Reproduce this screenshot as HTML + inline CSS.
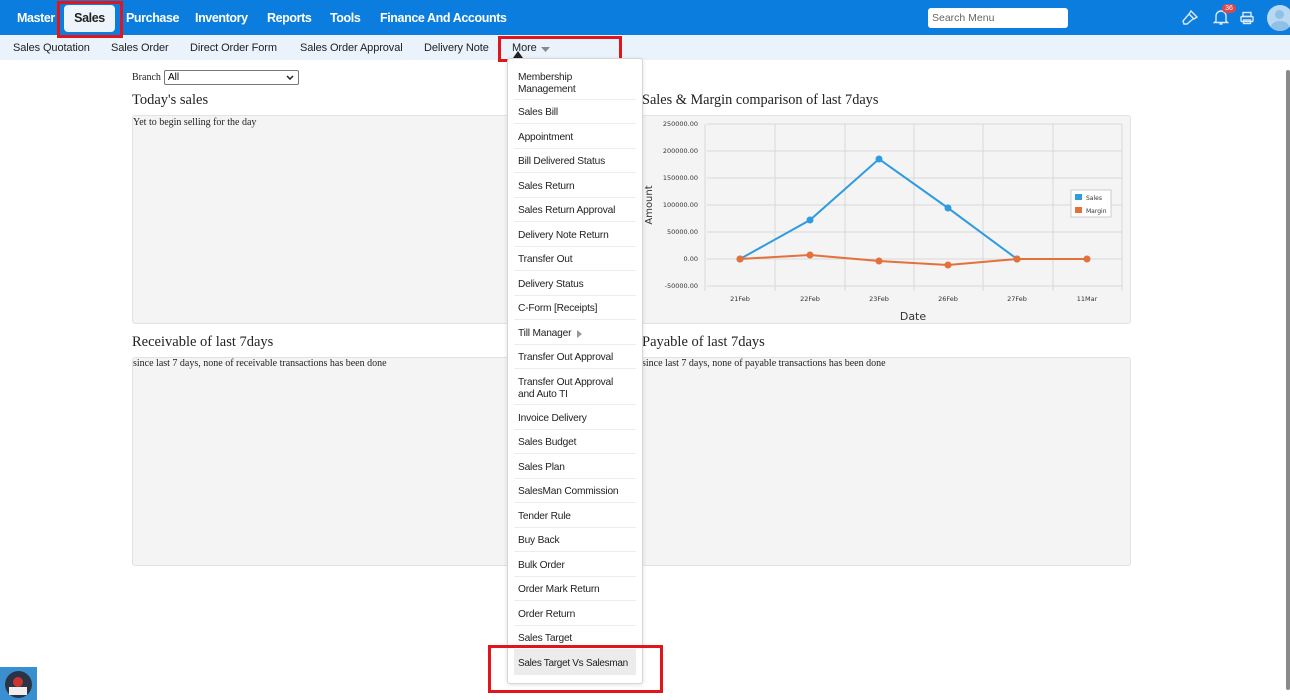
<!DOCTYPE html>
<html><head><meta charset="utf-8"><style>
*{box-sizing:border-box;margin:0;padding:0}
body{width:1290px;height:700px;position:relative;overflow:hidden;background:#fff;font-family:"Liberation Sans",sans-serif}
.top{position:absolute;left:0;top:0;width:1290px;height:35px;background:#0b7ddf}
.top .m{position:absolute;top:11px;color:#fff;font-weight:bold;font-size:12.5px;letter-spacing:-0.4px}
.salesTab{position:absolute;left:64px;top:5px;width:51px;height:27px;background:#eef4fb;border-radius:4px;color:#222;font-weight:bold;font-size:12.5px;text-align:center;line-height:27px;letter-spacing:-0.4px}
.sub{position:absolute;left:0;top:35px;width:1290px;height:25px;background:#eaf2fb}
.sub span{position:absolute;top:7px;font-size:11px;color:#222;letter-spacing:-0.1px}
.red{position:absolute;border:3px solid #e0161c}
.serif{font-family:"Liberation Serif",serif;color:#222;position:absolute;white-space:nowrap}
.box{position:absolute;background:#f4f4f4;border:1px solid #e2e2e2;border-radius:3px}
.dd{position:absolute;left:507px;top:58px;width:136px;height:626px;background:#fff;border:1px solid #d6d6d6;border-radius:3px;box-shadow:0 1px 4px rgba(0,0,0,.12)}
.it{position:absolute;left:6px;width:122px;border-bottom:1px solid #ececec;font-size:10.2px;color:#222;padding-left:4px;padding-top:4px;display:flex;align-items:center;line-height:12px;letter-spacing:-0.2px;white-space:nowrap}
</style></head><body>
<div class="top">
<span class="m" style="left:17px">Master</span>
<span class="m" style="left:126px">Purchase</span>
<span class="m" style="left:195px">Inventory</span>
<span class="m" style="left:267px">Reports</span>
<span class="m" style="left:330px">Tools</span>
<span class="m" style="left:380px">Finance And Accounts</span>
<div style="position:absolute;left:928px;top:8px;width:140px;height:20px;background:#fff;border-radius:3px;font-size:10.5px;color:#666;padding:4px 0 0 4px">Search Menu</div>
<svg style="position:absolute;left:1181px;top:9px" width="18" height="17" viewBox="0 0 18 17" fill="none" stroke="#dbe9f8" stroke-width="1.4"><path d="M10 2l6 6-3 2-5-5z M8 5l-6 7 1 3 3 0 6-5"/></svg>
<svg style="position:absolute;left:1213px;top:8px" width="16" height="18" viewBox="0 0 16 18" fill="none" stroke="#dbe9f8" stroke-width="1.4"><path d="M3 13V8a5 5 0 0 1 10 0v5l1.5 1.5h-13z M6.5 16h3"/></svg>
<div style="position:absolute;left:1222px;top:4px;width:14px;height:9px;border-radius:5px;background:#e04848;color:#fff;font-size:7px;text-align:center;line-height:9px">36</div>
<svg style="position:absolute;left:1240px;top:11px" width="14" height="14" viewBox="0 0 14 14" fill="none" stroke="#dbe9f8" stroke-width="1.4"><rect x="3" y="1.5" width="8" height="4"/><rect x="1" y="5.5" width="12" height="5" rx="1"/><rect x="3.5" y="9" width="7" height="3.5"/></svg>
<div style="position:absolute;left:1267px;top:5px;width:26px;height:26px;border-radius:50%;background:#b9d9f3;overflow:hidden"><div style="position:absolute;left:8px;top:5px;width:9px;height:9px;border-radius:50%;background:#8fc0e6"></div><div style="position:absolute;left:4px;top:16px;width:18px;height:12px;border-radius:50%;background:#8fc0e6"></div></div>
</div>
<div class="salesTab">Sales</div>
<div class="sub">
<span style="left:13px">Sales Quotation</span>
<span style="left:111px">Sales Order</span>
<span style="left:190px">Direct Order Form</span>
<span style="left:300px">Sales Order Approval</span>
<span style="left:424px">Delivery Note</span>
<span style="left:512px">More</span>
<svg style="position:absolute;left:541px;top:12px" width="9" height="5"><path d="M0 0h9L4.5 5z" fill="#888"/></svg>
</div>
<div class="red" style="left:57px;top:1px;width:66px;height:37px"></div>
<div class="red" style="left:498px;top:36px;width:124px;height:26px"></div>

<div class="serif" style="left:132px;top:72px;font-size:10px">Branch</div>
<div style="position:absolute;left:164px;top:70px;width:135px;height:15px;border:1px solid #777;border-radius:2px;font-size:10px;padding-left:3px;line-height:13px">All<svg style="position:absolute;right:4px;top:4px" width="8" height="5"><path d="M1 1l3 3 3-3" stroke="#222" stroke-width="1.5" fill="none"/></svg></div>
<div class="serif" style="left:132px;top:92px;font-size:14.5px">Today's sales</div>
<div class="box" style="left:132px;top:115px;width:390px;height:209px"></div>
<div class="serif" style="left:133px;top:117px;font-size:10px">Yet to begin selling for the day</div>
<div class="serif" style="left:642px;top:92px;font-size:14.3px">Sales &amp; Margin comparison of last 7days</div>
<div class="box" style="left:642px;top:115px;width:489px;height:209px"></div>
<svg style="position:absolute;left:642px;top:115px" width="489" height="209" font-family="DejaVu Sans,sans-serif">
<g stroke="#d8d8d8" stroke-width="1">
<path d="M65 9H480M65 36H480M65 63H480M65 90H480M65 117H480M65 144H480M65 171H480"/>
<path d="M63 9V176M133 9V176M203 9V176M272 9V176M341 9V176M411 9V176M480 9V176"/>
</g>
<g font-size="6.5" fill="#333" text-anchor="end"><text x="56" y="11">250000.00</text><text x="56" y="38">200000.00</text><text x="56" y="65">150000.00</text><text x="56" y="92">100000.00</text><text x="56" y="119">50000.00</text><text x="56" y="146">0.00</text><text x="56" y="173">-50000.00</text></g>
<g font-size="6.5" fill="#333" text-anchor="middle"><text x="98" y="186">21Feb</text><text x="168" y="186">22Feb</text><text x="237" y="186">23Feb</text><text x="306" y="186">26Feb</text><text x="375" y="186">27Feb</text><text x="445" y="186">11Mar</text></g>
<text x="271" y="205" font-size="11" fill="#333" text-anchor="middle">Date</text>
<text transform="translate(10 90) rotate(-90)" font-size="10" fill="#333" text-anchor="middle">Amount</text>
<polyline points="98,144 168,105 237,44 306,93 375,144" fill="none" stroke="#2f9be0" stroke-width="2"/>
<g fill="#2f9be0"><circle cx="98" cy="144" r="3.5"/><circle cx="168" cy="105" r="3.5"/><circle cx="237" cy="44" r="3.5"/><circle cx="306" cy="93" r="3.5"/><circle cx="375" cy="144" r="3.5"/></g>
<polyline points="98,144 168,140 237,146 306,150 375,144 445,144" fill="none" stroke="#e4703a" stroke-width="2"/>
<g fill="#e4703a"><circle cx="98" cy="144" r="3.5"/><circle cx="168" cy="140" r="3.5"/><circle cx="237" cy="146" r="3.5"/><circle cx="306" cy="150" r="3.5"/><circle cx="375" cy="144" r="3.5"/><circle cx="445" cy="144" r="3.5"/></g>
<rect x="429" y="75" width="40" height="27" fill="#fff" stroke="#ccc"/>
<rect x="433" y="79" width="7" height="6" fill="#2f9be0"/><rect x="433" y="92" width="7" height="6" fill="#e4703a"/>
<text x="444" y="85" font-size="6" fill="#333">Sales</text><text x="444" y="98" font-size="6" fill="#333">Margin</text>
</svg>

<div class="serif" style="left:132px;top:334px;font-size:14.5px">Receivable of last 7days</div>
<div class="box" style="left:132px;top:357px;width:390px;height:209px"></div>
<div class="serif" style="left:133px;top:358px;font-size:10px">since last 7 days, none of receivable transactions has been done</div>
<div class="serif" style="left:642px;top:334px;font-size:14.5px">Payable of last 7days</div>
<div class="box" style="left:642px;top:357px;width:489px;height:209px"></div>
<div class="serif" style="left:642px;top:358px;font-size:10px">since last 7 days, none of payable transactions has been done</div>

<svg style="position:absolute;left:513px;top:51px" width="10" height="7"><path d="M0 7L5 0 10 7z" fill="#222"/></svg>
<div class="dd">
<div class="it" style="top:6px;height:35px">Membership<br>Management</div>
<div class="it" style="top:40.5px;height:24.5px">Sales Bill</div>
<div class="it" style="top:65px;height:24.5px">Appointment</div>
<div class="it" style="top:89.5px;height:24.5px">Bill Delivered Status</div>
<div class="it" style="top:114px;height:24.5px">Sales Return</div>
<div class="it" style="top:138.5px;height:24.5px">Sales Return Approval</div>
<div class="it" style="top:163px;height:24.5px">Delivery Note Return</div>
<div class="it" style="top:187.5px;height:24.5px">Transfer Out</div>
<div class="it" style="top:212px;height:24.5px">Delivery Status</div>
<div class="it" style="top:236.5px;height:24.5px">C-Form [Receipts]</div>
<div class="it" style="top:261px;height:24.5px">Till Manager <svg style="margin-left:6px" width="5" height="8"><path d="M0 0l5 4-5 4z" fill="#999"/></svg></div>
<div class="it" style="top:285.5px;height:24.5px">Transfer Out Approval</div>
<div class="it" style="top:310px;height:36px">Transfer Out Approval<br>and Auto TI</div>
<div class="it" style="top:346px;height:24.5px">Invoice Delivery</div>
<div class="it" style="top:370.5px;height:24.5px">Sales Budget</div>
<div class="it" style="top:395px;height:24.5px">Sales Plan</div>
<div class="it" style="top:419.5px;height:24.5px">SalesMan Commission</div>
<div class="it" style="top:444px;height:24.5px">Tender Rule</div>
<div class="it" style="top:468.5px;height:24.5px">Buy Back</div>
<div class="it" style="top:493px;height:24.5px">Bulk Order</div>
<div class="it" style="top:517.5px;height:24.5px">Order Mark Return</div>
<div class="it" style="top:542px;height:24.5px">Order Return</div>
<div class="it" style="top:566.5px;height:24.5px">Sales Target</div>
<div class="it" style="top:591px;height:24.5px;background:#ececec;border:none;font-size:10px;letter-spacing:-0.3px">Sales Target Vs Salesman</div>
</div>
<div class="red" style="left:488px;top:645px;width:175px;height:48px"></div>

<div style="position:absolute;left:0;top:667px;width:37px;height:33px;background:#3a8fd0"><div style="position:absolute;left:5px;top:4px;width:27px;height:27px;border-radius:50%;background:#2b3446"></div><div style="position:absolute;left:13px;top:10px;width:10px;height:10px;border-radius:50%;background:#c33"></div><div style="position:absolute;left:9px;top:20px;width:18px;height:8px;background:#eee"></div></div>
<div style="position:absolute;left:1286px;top:70px;width:4px;height:620px;background:#8a8a8a;border-radius:2px"></div>
</body></html>
